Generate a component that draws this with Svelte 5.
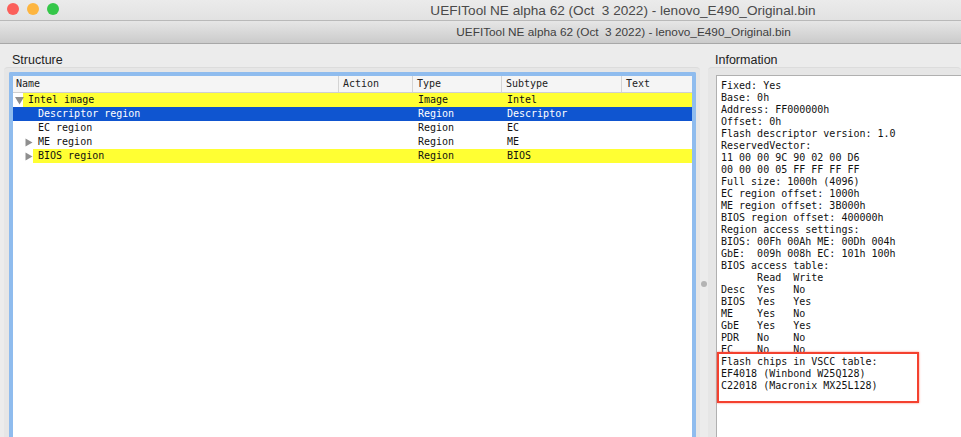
<script>
  const columns = ['Name', 'Action', 'Type', 'Subtype', 'Text'];
  const rows = [
    { name: 'Intel image', type: 'Image', subtype: 'Intel', indent: 10, arrow: 'down', kind: 'mark' },
    { name: 'Descriptor region', type: 'Region', subtype: 'Descriptor', indent: 20, kind: 'selected' },
    { name: 'EC region', type: 'Region', subtype: 'EC', indent: 20, kind: '' },
    { name: 'ME region', type: 'Region', subtype: 'ME', indent: 20, arrow: 'right', kind: '' },
    { name: 'BIOS region', type: 'Region', subtype: 'BIOS', indent: 20, arrow: 'right', kind: 'mark' }
  ];
  const info = `Fixed: Yes
Base: 0h
Address: FF000000h
Offset: 0h
Flash descriptor version: 1.0
ReservedVector:
11 00 00 9C 90 02 00 D6
00 00 00 05 FF FF FF FF
Full size: 1000h (4096)
EC region offset: 1000h
ME region offset: 3B000h
BIOS region offset: 400000h
Region access settings:
BIOS: 00Fh 00Ah ME: 00Dh 004h
GbE:  009h 008h EC: 101h 100h
BIOS access table:
      Read  Write
Desc  Yes   No
BIOS  Yes   Yes
ME    Yes   No
GbE   Yes   Yes
PDR   No    No
EC    No    No
Flash chips in VSCC table:
EF4018 (Winbond W25Q128)
C22018 (Macronix MX25L128)`;
  const title = 'UEFITool NE alpha 62 (Oct  3 2022) - lenovo_E490_Original.bin';
</script>

<div class="window">
  <header class="titlebar">
    <div class="lights">
      <span class="light red"></span>
      <span class="light yellow"></span>
      <span class="light green"></span>
    </div>
    <span class="title outer">{title}</span>
  </header>
  <div class="subbar"><span class="title inner">{title}</span></div>

  <main class="panes">
    <section class="pane left">
      <h2>Structure</h2>
      <div class="group">
        <div class="tree">
          <div class="line head">
            {#each columns as c}<div class="hcell">{c}</div>{/each}
          </div>
          {#each rows as r}
            <div class="line row {r.kind}">
              <div class="namecell" style="padding-left:{r.indent}px">
                {#if r.arrow === 'down'}
                  <svg class="arrow down" width="9" height="9" viewBox="0 0 9 9"><path d="M0 1H9L4.5 8.5Z" /></svg>
                {:else if r.arrow === 'right'}
                  <svg class="arrow right" width="8" height="9" viewBox="0 0 8 9"><path d="M0.5 0.5L7.5 4.5L0.5 8.5Z" /></svg>
                {/if}
                <span class="label">{r.name}</span>
              </div>
              <div class="cell"></div>
              <div class="cell">{r.type}</div>
              <div class="cell">{r.subtype}</div>
              <div class="cell"></div>
            </div>
          {/each}
        </div>
      </div>
    </section>

    <div class="splitter"><span class="grip"></span></div>

    <section class="pane right">
      <h2>Information</h2>
      <div class="group">
        <div class="info"><pre>{info}</pre><div class="callout"></div></div>
      </div>
    </section>
  </main>
</div>

<style>
  :global(body) { margin: 0; background: #ececec; overflow: hidden; }
  .window {
    width: 961px; height: 437px; overflow: hidden;
    display: flex; flex-direction: column;
    background: #ececec; font-family: "Liberation Sans", Arial, sans-serif;
  }
  .titlebar {
    height: 20px; flex: none; display: flex; align-items: center; justify-content: center;
    position: relative; background: linear-gradient(#ebebeb, #e2e2e2);
    border-bottom: 1px solid #b9b9b9;
  }
  .lights { position: absolute; left: 7px; top: 3px; display: flex; gap: 8px; }
  .light { width: 12px; height: 12px; border-radius: 50%; }
  .red { background: #fb5f5a; }
  .yellow { background: #fdb53f; }
  .green { background: #35c749; }
  .title { white-space: pre; color: #4a4a4a; }
  .outer { font-size: 13.6px; margin-left: 285px; margin-top: 1px; }
  .subbar {
    height: 22px; flex: none; display: flex; align-items: center; justify-content: center;
    background: linear-gradient(#e6e6e6, #cbcbcb); border-bottom: 1px solid #a8a8a8;
  }
  .inner { font-size: 11.8px; margin-left: 286px; color: #404040; }
  .panes { flex: 1; min-height: 0; display: grid; grid-template-columns: 700px 8px 1fr; padding-top: 9px; }
  .pane { display: flex; flex-direction: column; min-width: 0; min-height: 0; }
  h2 {
    margin: 0; font: 400 12.5px/14px "Liberation Sans", Arial, sans-serif; color: #222;
    height: 14px;
  }
  .left h2 { padding-left: 12px; }
  .right h2 { padding-left: 7px; }
  .group {
    flex: 1; min-height: 0; margin-top: 0; background: #e6e6e6;
    border-radius: 4px 4px 0 0; border-top: 1px solid #dcdcdc;
  }
  .left .group { margin-left: 4px; padding: 4px 4px 0 5px; }
  .right .group { padding: 7px 0 0 8px; }
  .tree {
    height: 100%; box-sizing: border-box; background: #fff;
    border: solid #8fbcee; border-width: 4px 4px 0 4px; border-radius: 2px 2px 0 0;
    font: 10px/14px "DejaVu Sans Mono", "Liberation Mono", monospace; color: #111;
  }
  .line { display: grid; grid-template-columns: 326px 74px 89px 120px 1fr; }
  .head { height: 17px; background: #f5f5f5; border-bottom: 1px solid #cfcfcf; box-sizing: border-box; }
  .hcell { padding-left: 4px; border-right: 1px solid #d4d4d4; line-height: 16px; color: #222; }
  .hcell:first-child { padding-left: 3px; }
  .hcell:last-child { border-right: none; }
  .row { height: 14px; }
  .namecell { position: relative; }
  .label { display: block; padding-left: 5px; height: 14px; white-space: pre; }
  .cell { padding-left: 5px; white-space: pre; }
  .mark .label, .mark .cell { background: #ffff33; }
  .selected { background: #0f55d0; color: #fff; }
  .arrow { position: absolute; fill: #8f8f8f; }
  .arrow.down { left: 2px; top: 3px; }
  .arrow.right { left: 12px; top: 3px; }
  .splitter { position: relative; }
  .grip {
    position: absolute; left: 1px; top: 228px; width: 6px; height: 6px; border-radius: 50%;
    background: #b4b4b4;
  }
  .info {
    position: relative; height: 100%; box-sizing: border-box; background: #fff;
    border-left: 1px solid #b0b0b0; border-top: 1px solid #b0b0b0;
    padding: 4px 0 0 4px;
  }
  pre { margin: 0; font: 10px/12px "DejaVu Sans Mono", "Liberation Mono", monospace; color: #111; }
  .callout {
    position: absolute; left: 0; top: 276px; width: 198px; height: 47px;
    border: 2px solid #f4412f; box-shadow: 0 0 2px rgba(255, 80, 60, .7);
  }
</style>
